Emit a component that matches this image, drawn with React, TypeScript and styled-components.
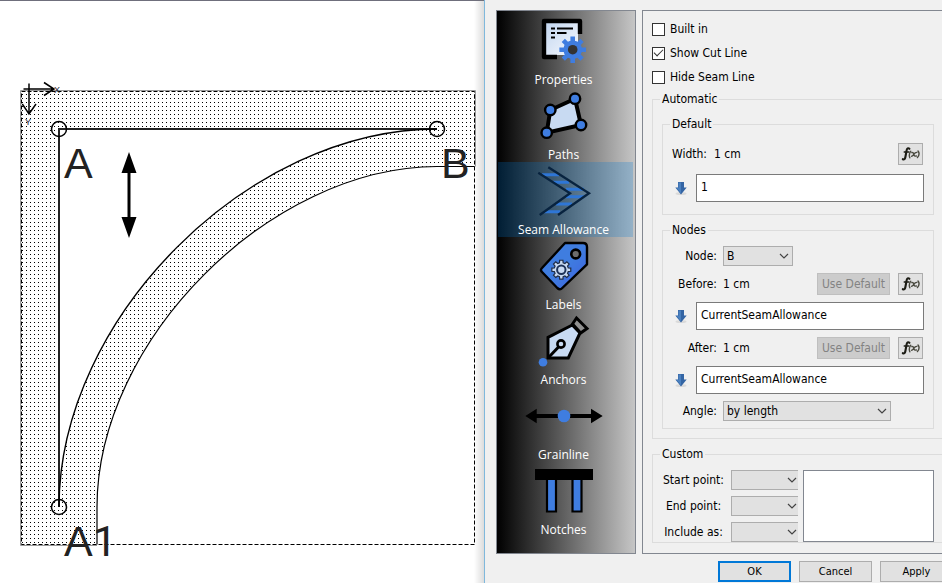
import React from "react";
import styled, { createGlobalStyle, css } from "styled-components";

const BLUE = "#3f7de0";
const PALE = "#c8daf2";

const GlobalStyle = createGlobalStyle`
  *, *::before, *::after { box-sizing: border-box; }
  body {
    margin: 0;
    background: #fff;
    color: #000;
    font: 12px/16px "DejaVu Sans Condensed", "Noto Sans", sans-serif;
    overflow: hidden;
  }
  button, input, select { font: inherit; color: inherit; margin: 0; }
`;

const Workspace = styled.div`
  display: flex;
  height: 100vh;
  overflow: hidden;
`;

const Scene = styled.main`
  flex: 1;
  min-width: 0;
  overflow: hidden;
  border-top: 1px solid #6f6f7c;
  background: linear-gradient(to left, #dcdcdc, #fff 10px);
`;

const Drawing = styled.svg`
  display: block;
  font-family: "Liberation Sans", Arial, sans-serif;
`;

const Dialog = styled.section`
  flex: 0 0 458px;
  display: flex;
  flex-direction: column;
  gap: 7px;
  padding: 10px 0 0 11px;
  border-left: 1px solid #7fb8dc;
  background: #f0f0f0;
  overflow: hidden;
`;

const DialogBody = styled.div`
  display: grid;
  grid-template-columns: 140px minmax(0, 1fr);
  gap: 6px;
  margin-right: -20px;
`;

const Sidebar = styled.nav`
  display: flex;
  flex-direction: column;
  padding: 1px 2px 1px 1px;
  border: 1px solid #828790;
  background: linear-gradient(to right, #000, #c6c6c6);
`;

const SidebarItem = styled.button<{ $active?: boolean }>`
  display: flex;
  flex-direction: column;
  align-items: center;
  justify-content: flex-start;
  height: 75px;
  padding: 0 4px 0 0;
  border: 0;
  background: ${(p) => (p.$active ? "rgba(0, 120, 215, 0.24)" : "transparent")};
  color: #fff;
  font: 12px/24px "Open Sans", "Noto Sans", sans-serif;
`;

const SidebarIcon = styled.svg`
  flex: none;
`;

const Settings = styled.div`
  display: flex;
  flex-direction: column;
  padding: 6px 9px 10px;
  border: 1px solid #828790;
`;

const CheckRow = styled.label`
  display: flex;
  align-items: center;
  gap: 5px;
  height: 24px;
`;

const CheckBox = styled.input`
  appearance: none;
  display: grid;
  width: 13px;
  height: 13px;
  border: 1px solid #333;
  background: #fff;

  &:checked::before {
    content: "";
    place-self: center;
    width: 9px;
    height: 5px;
    margin-bottom: 3px;
    border: solid #333;
    border-width: 0 0 1px 1px;
    transform: rotate(-45deg);
  }
`;

const Group = styled.fieldset<{ $pad: string; $gap: number }>`
  display: flex;
  flex-direction: column;
  gap: ${(p) => p.$gap}px;
  min-width: 0;
  margin: 0;
  padding: ${(p) => p.$pad};
  border: 1px solid #dcdcdc;
`;

const Legend = styled.legend`
  height: 16px;
  padding: 0 2px;
  margin-left: -2px;
`;

const AutomaticGroup = styled(Group)`
  margin-top: 2px;
`;

const CustomGroup = styled(Group)`
  margin-top: 7px;
`;

const Row = styled.div<{ $gap?: number }>`
  display: flex;
  align-items: center;
  gap: ${(p) => p.$gap ?? 6}px;
`;

const FieldLabel = styled.label`
  flex: 0 0 45px;
  text-align: right;
  white-space: nowrap;
`;

const FieldName = styled.span`
  flex: 0 0 45px;
  text-align: right;
  white-space: nowrap;
`;

const Value = styled.output`
  flex: 1;
`;

const frame = css`
  border: 1px solid #adadad;
  background: #e1e1e1;
`;

const FormulaButton = styled.button`
  ${frame}
  display: grid;
  place-items: center;
  width: 25px;
  height: 22px;
  margin-right: 1px;
  padding: 0;
`;

const DefaultButton = styled.button`
  width: 73px;
  height: 22px;
  margin-right: 2px;
  padding: 0;
  border: 1px solid #bfbfbf;
  background: #ccc;
  color: #838383;
  white-space: nowrap;
`;

const FormulaInput = styled.input`
  flex: 1;
  min-width: 0;
  height: 28px;
  padding: 0 4px 3px;
  border: 1px solid #7a7a7a;
  background: #fff;
`;

const SelectShell = styled.span<{ $width: number }>`
  position: relative;
  display: block;
  width: ${(p) => p.$width}px;
`;

const SelectBox = styled.select<{ $cut?: boolean }>`
  ${frame}
  display: block;
  width: 100%;
  height: 20px;
  padding: 0 20px 0 3px;
  border-radius: 0;
  appearance: none;
  ${(p) => p.$cut && "border-right: 0;"}
`;

const Chevron = styled.svg<{ $cut?: boolean }>`
  position: absolute;
  top: 6px;
  right: ${(p) => (p.$cut ? 1 : 4)}px;
  pointer-events: none;
`;

const CustomLayout = styled.div`
  display: flex;
  gap: 5px;
`;

const PointFields = styled.div`
  display: grid;
  grid-template-columns: 63px 67px;
  align-items: center;
  gap: 6px;
`;

const PointLabel = styled.label`
  text-align: center;
  white-space: nowrap;
`;

const PointList = styled.ul`
  width: 131px;
  margin: 0;
  padding: 0;
  border: 1px solid #828790;
  background: #fff;
  list-style: none;
`;

const Footer = styled.footer`
  display: flex;
  justify-content: flex-end;
  gap: 8px;
  margin-right: -11px;
`;

const DialogButton = styled.button<{ $primary?: boolean }>`
  flex: none;
  width: 73px;
  height: 21px;
  padding: 0;
  border: ${(p) => (p.$primary ? "2px solid #0078d7" : "1px solid #adadad")};
  background: #e1e1e1;
  font-size: 11px;
`;

function gearPath(cx: number, cy: number, outer: number, inner: number) {
  const points: string[] = [];
  for (let i = 0; i < 8; i++) {
    const mid = (i * Math.PI) / 4;
    const corners: [number, number][] = [
      [inner, -0.26],
      [outer, -0.17],
      [outer, 0.17],
      [inner, 0.26],
    ];
    corners.forEach(([r, d]) => {
      points.push(`${(cx + r * Math.cos(mid + d)).toFixed(2)} ${(cy + r * Math.sin(mid + d)).toFixed(2)}`);
    });
  }
  return `M${points.join("L")}Z`;
}

function PropertiesIcon() {
  return (
    <>
      <defs>
        <linearGradient id="page" x1="0" y1="0" x2="1" y2="1">
          <stop offset="0" stopColor="#c3d6ef" />
          <stop offset="1" stopColor="#f6f9fe" />
        </linearGradient>
      </defs>
      <path d="M22 11H54V43H22Z" fill="url(#page)" />
      <path d="M33 45H20V9H56V22" fill="none" stroke="#000" strokeWidth="4.4" strokeLinejoin="round" />
      <path d="M27 16.5H31M33 16.5H49M27 21H31M33 21H42.5M27 25.5H31" stroke="#000" strokeWidth="2.2" />
      <path d={gearPath(48.7, 37.7, 13.5, 9)} fill={BLUE} />
      <circle cx="48.7" cy="37.7" r="9.3" fill={BLUE} />
      <circle cx="48.7" cy="37.7" r="4.8" fill="#333" />
    </>
  );
}

function PathsIcon() {
  const nodes = [
    [51, 11.7],
    [26.3, 23],
    [57, 38],
    [22.7, 45.7],
  ];
  return (
    <>
      <path d="M51 11.7L26.3 23L22.7 45.7L57 38Z" fill={PALE} stroke="#000" strokeWidth="4" />
      {nodes.map(([x, y]) => (
        <circle key={x} cx={x} cy={y} r="5.2" fill={BLUE} stroke="#000" strokeWidth="2.4" />
      ))}
    </>
  );
}

function SeamIcon() {
  return (
    <>
      <path
        d="M18 12.7H35M29 20.3H45M42 27.3H60M42 34.7H60M32 42H48M20 49.7H36"
        stroke="#2e76d6"
        strokeWidth="3"
      />
      <path
        d="M24.3 5.3L65 31.3L34 53M14.3 10.7L46 31.3L15.7 53"
        fill="none"
        stroke="#08233f"
        strokeWidth="2.3"
      />
    </>
  );
}

function LabelsIcon() {
  return (
    <>
      <defs>
        <linearGradient id="tag" x1="0" y1="0" x2="1" y2="1">
          <stop offset="0.5" stopColor="#3f7de0" />
          <stop offset="1" stopColor="#3f5fe0" />
        </linearGradient>
      </defs>
      <path
        d="M41 6H59Q63 6 63 10V27.3L38.3 51Q36 53.5 33.3 51L18 35Q16 33 18 31Z"
        fill="url(#tag)"
        stroke="#000"
        strokeWidth="2.4"
        strokeLinejoin="round"
      />
      <circle cx="51.7" cy="17" r="4.4" fill="#6c6c6c" stroke="#000" strokeWidth="2.6" />
      <path d={gearPath(37.3, 32.7, 9.6, 7.2)} fill={PALE} stroke="#1e2c46" strokeWidth="1.2" />
      <circle cx="37.3" cy="32.7" r="4.2" fill={PALE} stroke="#1e3358" strokeWidth="2" />
    </>
  );
}

function AnchorsIcon() {
  return (
    <g stroke="#000" strokeWidth="3">
      <path d="M52.5 6L63 16.5L56.7 21L48.5 12Z" fill="#8f8f8f" />
      <path d="M24 25.3L48.3 13L56 21L44.3 46H24Z" fill={PALE} />
      <path d="M24 46L35 34.5" />
      <circle cx="37" cy="32" r="3.6" fill={PALE} strokeWidth="2.6" />
      <circle cx="19" cy="50.3" r="4.3" fill={BLUE} stroke="none" />
    </g>
  );
}

function GrainlineIcon() {
  return (
    <>
      <path d="M10 29H70" stroke="#000" strokeWidth="4" />
      <path d="M1.3 29L12.7 21.7V36.3ZM78.7 29L67 21.7V36.3Z" />
      <circle cx="40" cy="29" r="6.3" fill={BLUE} />
    </>
  );
}

function NotchesIcon() {
  return (
    <>
      <path d="M11 7H69V18H11Z" />
      <path d="M23 17H32V49.5H23ZM48.5 17H57.5V49.5H48.5Z" fill={BLUE} stroke="#000" strokeWidth="2.2" />
      <path d="M11 16H69V18H11Z" />
    </>
  );
}

const pages = [
  { name: "Properties", Icon: PropertiesIcon },
  { name: "Paths", Icon: PathsIcon },
  { name: "Seam Allowance", Icon: SeamIcon },
  { name: "Labels", Icon: LabelsIcon },
  { name: "Anchors", Icon: AnchorsIcon },
  { name: "Grainline", Icon: GrainlineIcon },
  { name: "Notches", Icon: NotchesIcon },
];

function FormulaIcon() {
  return (
    <svg width="20" height="16" viewBox="0 0 20 16" aria-hidden="true">
      <g fill="none" stroke="#1c1c14" strokeLinecap="round">
        <path d="M8.4 2.8C7.2 1.6 5.9 2.4 5.5 4.8L4.4 11C4 13.4 3 13.8 1.8 13.2" strokeWidth="2.1" />
        <path d="M3.2 6H8" strokeWidth="1.4" />
        <g stroke="#4a4a40">
          <path d="M9.8 5.2Q7.4 8.4 8.8 11.8M17 5Q19.4 8 16.4 11.6" strokeWidth="1.4" />
          <path d="M10.8 6.6Q12.4 6.2 12.8 8.4T15.4 10M15.8 6.4Q14 6.4 12.8 8.4T10.6 10.2" strokeWidth="1.4" />
        </g>
      </g>
    </svg>
  );
}

const ArrowSlot = styled.svg`
  flex: none;
`;

function DownArrow() {
  return (
    <ArrowSlot width="18" height="16" viewBox="0 0 18 16" aria-hidden="true">
      <ellipse cx="9" cy="13.5" rx="5.5" ry="1.6" fill="#dadada" />
      <path d="M6 2H12V7.5H14.7L9 14.4L3.3 7.5H6Z" fill="#3465a4" />
      <path d="M6.5 2.5H9V13.5L4.5 8H6.5Z" fill="#4a80bf" />
    </ArrowSlot>
  );
}

function Combo({ id, width, value, cut }: { id: string; width: number; value?: string; cut?: boolean }) {
  return (
    <SelectShell $width={width}>
      <SelectBox id={id} $cut={cut}>{value && <option>{value}</option>}</SelectBox>
      <Chevron $cut={cut} width="10" height="8" viewBox="0 0 10 8" aria-hidden="true">
        <path d="M1 2L5 6L9 2" fill="none" stroke="#444" strokeWidth="1.2" />
      </Chevron>
    </SelectShell>
  );
}

function FormulaRow({ label, value }: { label: string; value: string }) {
  return (
    <Row>
      <DownArrow />
      <FormulaInput aria-label={label} defaultValue={value} />
    </Row>
  );
}

function PatternDrawing() {
  return (
    <Drawing width="484" height="582" viewBox="0 1 484 582" role="img" aria-label="Pattern piece">
      <defs>
        <pattern id="dots" width="4" height="4" patternUnits="userSpaceOnUse">
          <path d="M2 2H3V3H2Z" shapeRendering="crispEdges" />
        </pattern>
      </defs>
      <path
        d="M21.5 91.5H474.5V166.5H437C270 167 97 340 97 507V544.5H21.5ZM59 129V507C59 318 248 129 437 129Z"
        fill="url(#dots)"
        fillRule="evenodd"
      />
      <path d="M97 545.5H20.5V90.5H475.5V166.5" fill="none" stroke="#9a9a9a" />
      <path d="M474.5 166.5H437C270 167 97 340 97 507V544.5" fill="none" stroke="#000" strokeWidth="1.2" />
      <path d="M21.5 91.5H474.5V544.5H21.5V91.5" fill="none" stroke="#000" strokeWidth="1" strokeDasharray="4 2" />
      <path d="M437 129H59V507" fill="none" stroke="#222" strokeWidth="2" />
      <path d="M59 507C59 318 248 129 437 129" fill="none" stroke="#000" strokeWidth="1.4" />
      <g fill="none" stroke="#000" strokeWidth="1.5">
        <circle cx="59" cy="129" r="7.5" />
        <circle cx="437" cy="129" r="7.5" />
        <circle cx="59" cy="507" r="7.5" />
        <path d="M23.5 89H54M44 82.5L54 89L44 95.5M29 83.5V114M22.3 104L29 114L36 104" />
      </g>
      <path d="M129 170V220" stroke="#000" strokeWidth="3" />
      <path d="M129 152L136.5 173H121.5ZM129 238L136.5 217H121.5Z" />
      <g fill="#222" fontSize="43">
        <text x="64" y="178">A</text>
        <text x="441" y="178">B</text>
        <text x="64" y="556">A<tspan fontFamily="Roboto, sans-serif">1</tspan></text>
      </g>
      <g fill="#223" fontSize="9">
        <text x="54" y="93">X</text>
        <text x="25" y="125">Y</text>
      </g>
    </Drawing>
  );
}

export default function App() {
  return (
    <>
      <GlobalStyle />
      <Workspace>
        <Scene>
          <PatternDrawing />
        </Scene>
        <Dialog aria-label="Pattern piece properties">
          <DialogBody>
            <Sidebar>
              {pages.map(({ name, Icon }) => (
                <SidebarItem key={name} type="button" $active={name === "Seam Allowance"}>
                  <SidebarIcon width="80" height="56" viewBox="0 0 80 56" aria-hidden="true">
                    <Icon />
                  </SidebarIcon>
                  {name}
                </SidebarItem>
              ))}
            </Sidebar>
            <Settings>
              <CheckRow><CheckBox type="checkbox" />Built in</CheckRow>
              <CheckRow><CheckBox type="checkbox" defaultChecked />Show Cut Line</CheckRow>
              <CheckRow><CheckBox type="checkbox" />Hide Seam Line</CheckRow>

              <AutomaticGroup $pad="9px 17px 9px 9px" $gap={7}>
                <Legend>Automatic</Legend>
                <Group $pad="11px 9px 12px" $gap={9}>
                  <Legend>Default</Legend>
                  <Row $gap={7}>
                    <span>Width:</span>
                    <Value>1 cm</Value>
                    <FormulaButton type="button" aria-label="Edit width formula"><FormulaIcon /></FormulaButton>
                  </Row>
                  <FormulaRow label="Width formula" value="1" />
                </Group>
                <Group $pad="8px 9px 7px" $gap={7}>
                  <Legend>Nodes</Legend>
                  <Row>
                    <FieldLabel htmlFor="node">Node:</FieldLabel>
                    <Combo id="node" width={70} value="B" />
                  </Row>
                  {["Before", "After"].map((side) => (
                    <React.Fragment key={side}>
                      <Row>
                        <FieldName>{side}:</FieldName>
                        <Value>1 cm</Value>
                        <DefaultButton type="button" disabled>Use Default</DefaultButton>
                        <FormulaButton type="button" aria-label={`Edit ${side} formula`}><FormulaIcon /></FormulaButton>
                      </Row>
                      <FormulaRow label={`${side} formula`} value="CurrentSeamAllowance" />
                    </React.Fragment>
                  ))}
                  <Row>
                    <FieldLabel htmlFor="angle">Angle:</FieldLabel>
                    <Combo id="angle" width={168} value="by length" />
                  </Row>
                </Group>
              </AutomaticGroup>

              <CustomGroup $pad="8px 9px 0" $gap={0}>
                <Legend>Custom</Legend>
                <CustomLayout>
                  <PointFields>
                    <PointLabel htmlFor="start">Start point:</PointLabel>
                    <Combo id="start" width={67} cut />
                    <PointLabel htmlFor="end">End point:</PointLabel>
                    <Combo id="end" width={67} cut />
                    <PointLabel htmlFor="include">Include as:</PointLabel>
                    <Combo id="include" width={67} cut />
                  </PointFields>
                  <PointList aria-label="Custom points" />
                </CustomLayout>
              </CustomGroup>
            </Settings>
          </DialogBody>
          <Footer>
            <DialogButton type="button" $primary>OK</DialogButton>
            <DialogButton type="button">Cancel</DialogButton>
            <DialogButton type="button">Apply</DialogButton>
          </Footer>
        </Dialog>
      </Workspace>
    </>
  );
}
